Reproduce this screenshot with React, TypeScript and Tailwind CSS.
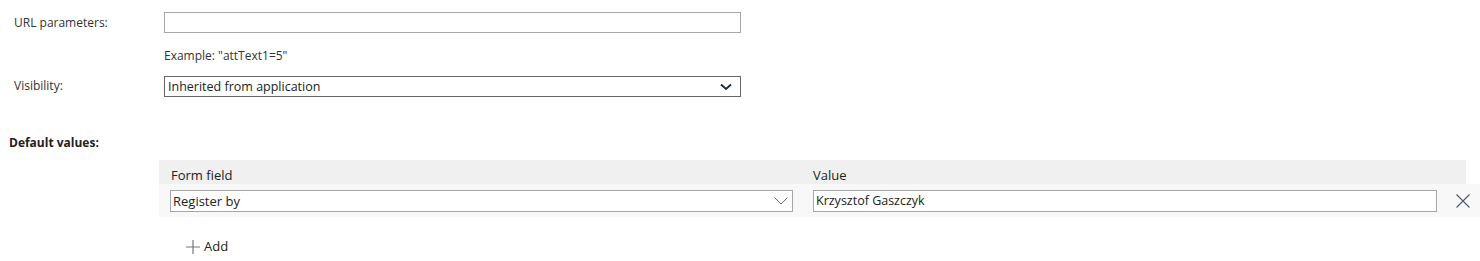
import React from 'react';

const font = { fontFamily: '"Open Sans", "Noto Sans", sans-serif' };

function ChevronBold() {
  return (
    <svg width="12" height="8" viewBox="0 0 12 8" className="shrink-0">
      <path d="M1 1.5 L6 6 L11 1.5" fill="none" stroke="#1f2a44" strokeWidth="2" />
    </svg>
  );
}

function ChevronThin() {
  return (
    <svg width="14" height="8" viewBox="0 0 14 8" className="shrink-0">
      <path d="M0.5 0.5 L7 7 L13.5 0.5" fill="none" stroke="#5a6e8a" strokeWidth="1" />
    </svg>
  );
}

export default function App() {
  return (
    <div className="w-[1480px] h-[261px] bg-white text-[12px] text-[#333]" style={font}>
      <div className="pt-[12px]">
        {/* URL parameters */}
        <div className="flex items-start">
          <div className="w-[164px] pl-[14px] pt-[2px] leading-[17px]">URL parameters:</div>
          <div className="w-[577px] h-[21px] border border-[#a6a6a6] bg-white" />
        </div>
        <div className="pl-[164px] mt-[14px] leading-[17px]">Example: "attText1=5"</div>

        {/* Visibility */}
        <div className="flex items-start mt-[12px]">
          <div className="w-[164px] pl-[14px] pt-[1px] leading-[17px]">Visibility:</div>
          <div className="w-[577px] h-[21px] border border-[#666] bg-white flex items-center justify-between pl-[3px] pr-[8px]">
            <span className="text-[12.5px] leading-none pt-[2px] text-[#222]">Inherited from application</span>
            <ChevronBold />
          </div>
        </div>

        {/* Default values */}
        <div className="pl-[9px] mt-[37px] font-bold text-[#222] leading-[17px]">Default values:</div>

        <div className="ml-[159px] mt-[9px]">
          <div className="flex h-[24px] w-[1307px] bg-[#f0f0f0] items-end">
            <div className="w-[654px] pl-[12px] text-[13px] leading-[17px] text-[#222]">Form field</div>
            <div className="text-[13px] leading-[17px] text-[#222]">Value</div>
          </div>
          <div className="flex items-center h-[33px] bg-[#f8f8f8]">
            <div className="ml-[11px] w-[623px] h-[22px] border border-[#a6a6a6] bg-white flex items-center justify-between pl-[2px] pr-[4px]">
              <span className="text-[13px] leading-none pt-[1px] text-[#222]">Register by</span>
              <ChevronThin />
            </div>
            <div className="ml-[20px] w-[624px] h-[22px] border border-[#a6a6a6] bg-white flex items-center pl-[2px]">
              <span className="text-[12.5px] leading-none pt-[1px] text-[#222]">Krzysztof Gaszczyk</span>
            </div>
            <div className="ml-[19px]">
              <svg width="14" height="14" viewBox="0 0 14 14">
                <path d="M0.5 0.5 L13.5 13.5 M13.5 0.5 L0.5 13.5" fill="none" stroke="#4a5a70" strokeWidth="1.1" />
              </svg>
            </div>
          </div>
        </div>

        <div className="flex items-center ml-[186px] mt-[21px] gap-[4px]">
          <svg width="14" height="14" viewBox="0 0 14 14">
            <path d="M7 0 V14 M0 7 H14" fill="none" stroke="#777" strokeWidth="1.2" />
          </svg>
          <span className="text-[13px] leading-[17px] text-[#222]">Add</span>
        </div>
      </div>
    </div>
  );
}
